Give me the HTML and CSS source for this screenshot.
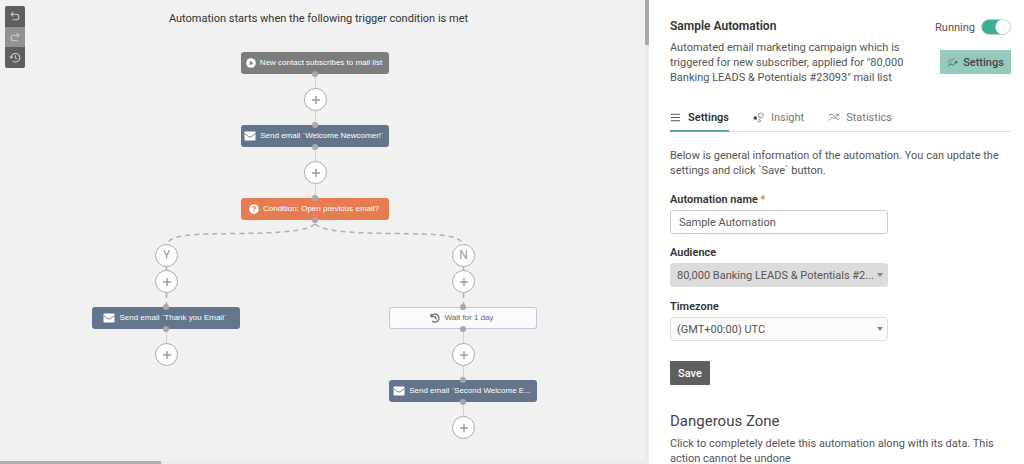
FILE: index.html
```html
<!DOCTYPE html>
<html lang="en">
<head>
  <meta charset="UTF-8">
  <title>Sample Automation</title>
  <link rel="stylesheet" href="styles.css">
</head>
<body>

  <!-- icons used more than once -->
  <svg class="icon-defs" aria-hidden="true">
    <symbol id="icon-plus" viewBox="0 0 10 10">
      <path d="M5 1v8M1 5h8" fill="none" stroke="currentColor" stroke-width="1.4"/>
    </symbol>
    <symbol id="icon-mail" viewBox="0 0 12 10">
      <rect x="0.5" y="0.5" width="11" height="9" rx="0.8" fill="currentColor"/>
      <path d="M0.5 2.6 4.6 5.6Q6 6.6 7.4 5.6L11.5 2.6" fill="none" stroke="#64758b" stroke-width="0.9"/>
    </symbol>
  </svg>

  <div class="app">
    <main class="canvas">
      <div class="toolbar">
        <button class="tool" aria-label="Undo">
          <svg viewBox="0 0 14 14"><path d="M5 2 2.5 4.5 5 7M2.8 4.5h5.7a3 3 0 0 1 0 6.2H4" /></svg>
        </button>
        <button class="tool tool-off" aria-label="Redo">
          <svg viewBox="0 0 14 14"><path d="M9 2 11.5 4.5 9 7M11.2 4.5H5.5a3 3 0 0 0 0 6.2H10" /></svg>
        </button>
        <button class="tool" aria-label="History">
          <svg viewBox="0 0 14 14"><path d="M2.6 7.5a5 5 0 1 1 1.7 3.5M0.8 5.8l1.8 1.9 2-1.7M7.5 4.5v3l1.9 1.5" /></svg>
        </button>
      </div>

      <p class="hint">Automation starts when the following trigger condition is met</p>

      <div class="flow">
        <svg class="links" width="640" height="464" aria-hidden="true">
          <path class="line" d="M315.5 74v51M315.5 147v51M166.5 329v25M463.5 329v51M463.5 402v25"/>
          <path class="dash" d="M315 224C307 231 283 233 239 233.5C193 234 168 234 166.5 246M315 224C323 231 347 233 391 233.5C437 234 462 234 463.5 246"/>
          <path class="dash" d="M166.5 266v41M463.5 266v41"/>
        </svg>

        <button class="node trigger col-mid row-1">
          <svg class="round-icon" viewBox="0 0 10 10"><circle cx="5" cy="5" r="4.8" fill="#fff"/><path d="M3.8 2.7v4.6L7.4 5z" fill="#7d7d7d"/></svg>
          <span>New contact subscribes to mail list</span>
        </button>
        <button class="step col-mid row-1b" aria-label="Add step"><svg><use href="#icon-plus"/></svg></button>
        <button class="node email col-mid row-2">
          <svg class="mail-icon"><use href="#icon-mail"/></svg>
          <span>Send email `Welcome Newcomer!`</span>
        </button>
        <button class="step col-mid row-2b" aria-label="Add step"><svg><use href="#icon-plus"/></svg></button>
        <button class="node condition col-mid row-3">
          <svg class="round-icon" viewBox="0 0 10 10"><circle cx="5" cy="5" r="4.8" fill="#fff"/><path d="M3.6 3.9C3.7 2 6.5 2.1 6.4 3.9 6.3 4.8 5 4.8 5 6M5 6.8v1" fill="none" stroke="#e67c52" stroke-width="1.1"/></svg>
          <span>Condition: Open previous email?</span>
        </button>

        <span class="step col-left row-4">Y</span>
        <button class="step col-left row-4b" aria-label="Add step"><svg><use href="#icon-plus"/></svg></button>
        <button class="node email col-left row-5">
          <svg class="mail-icon"><use href="#icon-mail"/></svg>
          <span>Send email `Thank you Email`</span>
        </button>
        <button class="step col-left row-5b" aria-label="Add step"><svg><use href="#icon-plus"/></svg></button>

        <span class="step col-right row-4">N</span>
        <button class="step col-right row-4b" aria-label="Add step"><svg><use href="#icon-plus"/></svg></button>
        <button class="node wait col-right row-5">
          <svg class="round-icon" viewBox="0 0 10 10"><path d="M1.5 3.3A4 4 0 1 1 2.2 8M1 0.8v2.9h2.9M5.2 2.9v2.4l1.5 1" fill="none" stroke="currentColor" stroke-width="1.2"/></svg>
          <span>Wait for 1 day</span>
        </button>
        <button class="step col-right row-5b" aria-label="Add step"><svg><use href="#icon-plus"/></svg></button>
        <button class="node email col-right row-6">
          <svg class="mail-icon"><use href="#icon-mail"/></svg>
          <span>Send email `Second Welcome E...</span>
        </button>
        <button class="step col-right row-6b" aria-label="Add step"><svg><use href="#icon-plus"/></svg></button>
      </div>

      <div class="scroll-y"></div>
      <div class="scroll-x"></div>
    </main>

    <aside class="sidebar">
      <header class="summary">
        <div class="about">
          <h1>Sample Automation</h1>
          <p>Automated email marketing campaign which is triggered for new subscriber, applied for "80,000 Banking LEADS &amp; Potentials #23093" mail list</p>
        </div>
        <div class="actions">
          <label class="running">Running <input type="checkbox" class="switch" checked></label>
          <button class="settings-btn">
            <svg viewBox="0 0 12 12"><path d="M1 10 3.8 7.2 6 9.2 10.8 5M8.5 5h2.3v2M2 3.5h1.5M5.5 2v1.5M8 1.5v1M1 6h1M4 5l1 1"/></svg>
            Settings
          </button>
        </div>
      </header>

      <nav class="tabs">
        <a href="#" class="active">
          <svg viewBox="0 0 12 12"><path d="M1 2.5h10M1 6h10M1 9.5h10"/></svg>Settings
        </a>
        <a href="#">
          <svg viewBox="0 0 12 12"><circle cx="2.5" cy="6.5" r="2" fill="#444" stroke="none"/><circle cx="8.5" cy="3.7" r="2.7"/><circle cx="7" cy="9.5" r="1.3"/></svg>Insight
        </a>
        <a href="#">
          <svg viewBox="0 0 12 12"><path d="M0.5 4C2 2.2 4.500 2 6 3.500S9 8.500 11.500 8.500M0.500 9.500 4.500 5.800 6.500 7.500 11 2.500M8.500 2.500H11.200V5"/></svg>Statistics
        </a>
      </nav>

      <p class="intro">Below is general information of the automation. You can update the settings and click `Save` button.</p>

      <form class="form">
        <label for="name">Automation name <span class="required">*</span></label>
        <input type="text" id="name" value="Sample Automation">

        <label for="audience">Audience</label>
        <div class="select muted">
          <select id="audience"><option>80,000 Banking LEADS &amp; Potentials #2...</option></select>
        </div>

        <label for="timezone">Timezone</label>
        <div class="select">
          <select id="timezone"><option>(GMT+00:00) UTC</option></select>
        </div>

        <button type="button" class="save">Save</button>
      </form>

      <section class="danger">
        <h2>Dangerous Zone</h2>
        <p>Click to completely delete this automation along with its data. This action cannot be undone</p>
      </section>
    </aside>
  </div>

</body>
</html>
```

FILE: styles.css
```css
* {
  box-sizing: border-box;
}
body {
  margin: 0;
  font-family: Roboto, sans-serif;
  font-size: 11px;
  line-height: 15px;
  color: #555;
}
h1, h2, p {
  margin: 0;
}
button, input, select {
  font: inherit;
  color: inherit;
}
button {
  padding: 0;
  border: none;
  cursor: pointer;
}
.icon-defs {
  display: none;
}
.app {
  display: grid;
  grid-template-columns: minmax(0, 1fr) 375px;
  height: 100vh;
  overflow: hidden;
}

/* canvas */
.canvas {
  position: relative;
  overflow: hidden;
  background: #f1f1f1;
}
.hint {
  padding: 11px 12px 0 0;
  text-align: center;
  color: #333;
}
.toolbar {
  position: absolute;
  top: 6px;
  left: 5px;
  display: grid;
  border-radius: 2px;
  overflow: hidden;
}
.tool {
  width: 20px;
  height: 21px;
  padding: 4px;
  background: #5e5e5e;
  color: #ccc;
}
.tool-off {
  height: 20px;
  background: #929292;
}
.tool svg {
  display: block;
  width: 12px;
  height: 13px;
  fill: none;
  stroke: currentColor;
  stroke-width: 1.2;
}

/* flow chart */
.flow, .links {
  position: absolute;
  top: 0;
  left: 0;
}
.links {
  fill: none;
}
.line {
  stroke: #d2d2d2;
}
.dash {
  stroke: #b0b0b0;
  stroke-width: 1.5;
  stroke-dasharray: 5 4;
}
.node {
  position: absolute;
  display: flex;
  align-items: center;
  justify-content: center;
  gap: 4px;
  width: 148px;
  height: 22px;
  margin-left: -74px;
  padding-right: 2px;
  border-radius: 3px;
  font-family: 'Liberation Sans', Arial, sans-serif;
  font-size: 8px;
  line-height: 12px;
  white-space: nowrap;
  color: #fff;
}
.node::before, .node::after {
  content: "";
  position: absolute;
  left: 71px;
  width: 6px;
  height: 6px;
  border-radius: 50%;
  background: #a8a8a8;
}
.node::before {
  top: -3px;
}
.node::after {
  bottom: -3px;
}
.trigger::before {
  display: none;
}
.trigger {
  background: #7d7d7d;
}
.email {
  background: #64758b;
}
.condition {
  background: #e67c52;
}
.wait {
  background: #fafafa;
  color: #666;
  box-shadow: inset 0 0 0 1px #bfc8e0;
}
.round-icon {
  width: 10px;
  height: 10px;
}
.mail-icon {
  width: 12px;
  height: 10px;
}
.step {
  position: absolute;
  display: grid;
  place-items: center;
  width: 23px;
  height: 23px;
  margin-left: -11px;
  border: 1px solid #aaa;
  border-radius: 50%;
  background: #fff;
  font-size: 12px;
  color: #999;
}
.step svg {
  width: 10px;
  height: 10px;
}
.col-left { left: 166px; }
.col-mid { left: 315px; }
.col-right { left: 463px; }
.row-1 { top: 52px; }
.row-1b { top: 88px; }
.row-2 { top: 125px; }
.row-2b { top: 161px; }
.row-3 { top: 198px; }
.row-4 { top: 244px; }
.row-4b { top: 270px; }
.row-5 { top: 307px; }
.row-5b { top: 343px; }
.row-6 { top: 380px; }
.row-6b { top: 416px; }

.scroll-y {
  position: absolute;
  top: 0;
  right: 0;
  bottom: 0;
  width: 4px;
  background: linear-gradient(#a8a8a8 45px, #e9ebed 45px);
}
.scroll-x {
  position: absolute;
  left: 0;
  right: 4px;
  bottom: 0;
  height: 3px;
  background: linear-gradient(90deg, #b0b0b0 161px, #ececec 161px);
}

/* sidebar */
.sidebar {
  padding: 19px 13px 0 21px;
  overflow: hidden;
  background: #fff;
}
.summary {
  display: flex;
  justify-content: space-between;
}
.about {
  width: 248px;
}
h1 {
  margin-bottom: 6px;
  font-size: 12px;
  font-weight: 600;
  color: #333;
}
.actions {
  display: flex;
  flex-direction: column;
  align-items: flex-end;
  gap: 15px;
}
.running {
  display: flex;
  align-items: center;
  gap: 6px;
}
.switch {
  appearance: none;
  width: 30px;
  height: 16px;
  margin: 0;
  border: 1px solid #ccc;
  border-radius: 8px;
  background: radial-gradient(circle at 21px 7px, #fff 7px, #3bb093 8px);
}
.settings-btn {
  display: flex;
  align-items: center;
  justify-content: center;
  gap: 5px;
  width: 71px;
  height: 24px;
  background: #95c9bd;
  font-weight: 500;
  color: #444;
}
.settings-btn svg, .tabs svg {
  width: 11px;
  height: 11px;
  fill: none;
  stroke: currentColor;
  stroke-width: 0.9;
}
.tabs {
  display: flex;
  gap: 24px;
  margin: 20px 0 16px;
  border-bottom: 1px solid #ddd;
}
.tabs a {
  display: flex;
  align-items: center;
  gap: 7px;
  height: 27px;
  margin-bottom: -1px;
  padding-bottom: 3px;
  text-decoration: none;
  color: #777;
}
.tabs .active {
  border-bottom: 2px solid #58ac9f;
  padding-bottom: 1px;
  font-weight: 600;
  color: #333;
}
.form {
  display: grid;
  width: 218px;
  margin-top: 14px;
}
.form label {
  margin-bottom: 3px;
  font-weight: 600;
  color: #333;
}
.required {
  color: #e67c52;
}
.form input, .select select {
  width: 100%;
  height: 24px;
  border: 1px solid #ccc;
  border-radius: 3px;
}
.form input {
  margin-bottom: 11px;
  padding: 0 8px;
}
.select {
  position: relative;
  margin-bottom: 12px;
}
.select select {
  display: block;
  appearance: none;
  padding: 0 6px;
  border-color: #ddd;
  background: #fafafa;
}
.muted select {
  background: #dcdcdc;
}
.select::after {
  content: "";
  position: absolute;
  top: 10px;
  right: 5px;
  border: 3px solid transparent;
  border-top: 4px solid #888;
  border-bottom: none;
}
.save {
  width: 40px;
  height: 24px;
  margin-top: 8px;
  border-radius: 1px;
  background: #5e5e5e;
  font-weight: 500;
  color: #fff;
}
.danger {
  margin-top: 26px;
}
h2 {
  margin-bottom: 5px;
  font-size: 15px;
  line-height: 20px;
  font-weight: 400;
  color: #444;
}
```
